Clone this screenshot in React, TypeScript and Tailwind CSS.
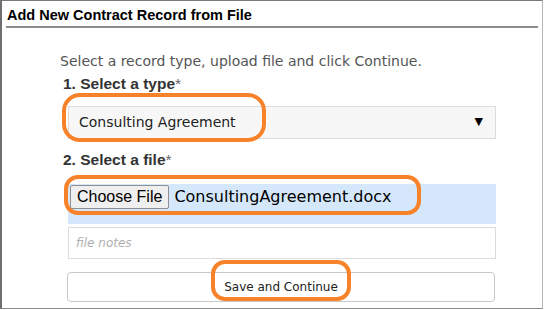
export default function App() {
  return (
    <div className="relative w-[544px] h-[310px] bg-white overflow-hidden font-['DejaVu_Sans',sans-serif]">
      <div className="w-[543px] h-[309px] border-l-2 border-t border-b border-r border-l-[#6f6f6f] border-t-[#7a7a7a] border-b-[#8a8a8a] border-r-[#b5b5b5]">
        <div className="mx-[4px] h-[27px] border-b-2 border-[#8c8c8c] flex items-end pb-[4px]">
          <h1 className="text-[14.5px] font-bold text-black leading-none pl-[1px] font-['Liberation_Sans',sans-serif]">
            Add New Contract Record from File
          </h1>
        </div>

        <div className="pl-[58px] pt-[23px]">
          <p className="text-[14px] leading-[20px] text-[#555]">
            Select a record type, upload file and click Continue.
          </p>
          <h2 className="mt-[3px] pl-[3px] text-[15.5px] font-bold leading-[20px] text-[#333] font-['Liberation_Sans',sans-serif]">
            1. Select a type<span className="font-normal text-[#666]">*</span>
          </h2>

          <div className="mt-[12px] ml-[8px] w-[428px] h-[33px] bg-[#f7f7f7] border border-[#dcdcdc] flex items-center justify-between pl-[10px] pr-[12px]">
            <span className="text-[14px] text-[#222]">Consulting Agreement</span>
            <span className="text-[11px] text-black">▼</span>
          </div>

          <h2 className="mt-[11px] pl-[3px] text-[15.5px] font-bold leading-[20px] text-[#333] font-['Liberation_Sans',sans-serif]">
            2. Select a file<span className="font-normal text-[#666]">*</span>
          </h2>

          <div className="mt-[14px] ml-[8px] w-[428px] h-[40px] bg-[#d5e8fb] flex items-start pt-[1px] pl-[2px]">
            <button className="h-[24px] px-[6px] bg-[#efefef] border border-[#8f8f8f] rounded-[2px] text-[16px] leading-none text-black font-['Liberation_Sans',sans-serif]">
              Choose File
            </button>
            <span className="ml-[5px] text-[16px] leading-[24px] text-black">
              ConsultingAgreement.docx
            </span>
          </div>

          <div className="mt-[3px] ml-[8px] w-[428px] h-[32px] border border-[#dcdcdc] flex items-center pl-[7px]">
            <span className="text-[12px] italic text-[#b0b0b0]">file notes</span>
          </div>

          <button className="mt-[13px] ml-[7px] w-[428px] h-[30px] bg-white border border-[#c8c8c8] rounded-[4px] text-[12px] text-[#222]">
            Save and Continue
          </button>
        </div>
      </div>

      <div className="absolute left-[62px] top-[93px] w-[204px] h-[49px] border-4 border-[#f8822a] rounded-[18px] pointer-events-none" />
      <div className="absolute left-[64px] top-[175px] w-[357px] h-[40px] border-4 border-[#f8822a] rounded-[14px] pointer-events-none" />
      <div className="absolute left-[211px] top-[260px] w-[140px] h-[41px] border-4 border-[#f8822a] rounded-[14px] pointer-events-none" />
    </div>
  );
}
